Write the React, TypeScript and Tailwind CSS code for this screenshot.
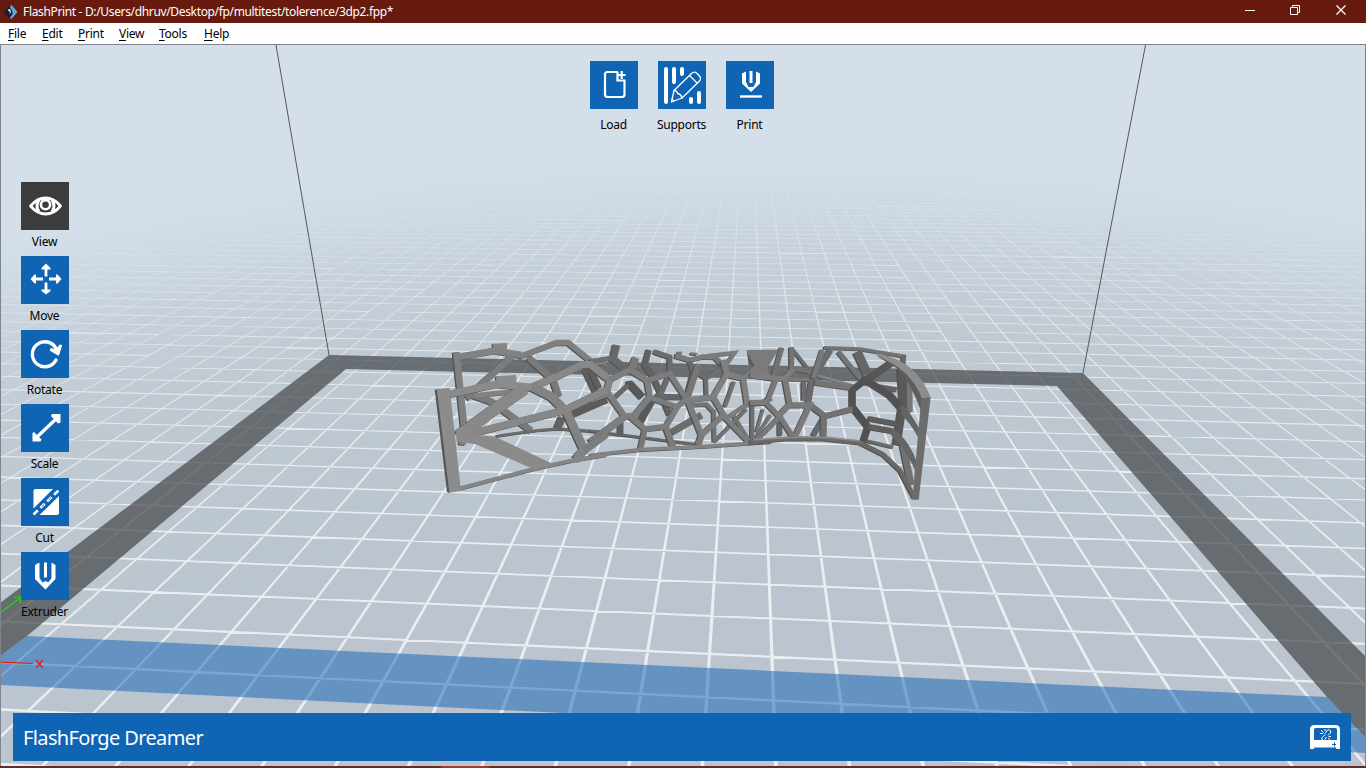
import React from "react";

type Point = [number, number];
type Strut = { pts: string; w: number; c: string };

/* ---------- build plate projection ---------- */

const STEP_U = 0.0485;
const OFFSET_U = 0.0165;
const STEP_V = 1 / 12.58;
const OFFSET_V = -0.66 / 12.58;

function project(col: number, row: number): Point {
  const u = OFFSET_U + STEP_U * col;
  const v = OFFSET_V + STEP_V * row;
  const w = 1 - 0.0982 * u + 0.791 * v;
  return [(27 + 1169.7 * u + 592.7 * v) / w, (636 - 7.45 * u + 24.9 * v) / w];
}

function quad(points: Point[]): string {
  return "M" + points.map(([c, r]) => project(c, r).map((n) => n.toFixed(5)).join(" ")).join("L") + "Z";
}

const HALF = 0.026;
const columns = Array.from({ length: 130 }, (_, i) => i - 58);
const rows = Array.from({ length: 64 }, (_, i) => i - 2);
const columnPath = columns
  .map((c) => quad([[c - HALF, -2.4], [c + HALF, -2.4], [c + HALF, 62], [c - HALF, 62]]))
  .join("");
const rowPaths = rows.map((r) => {
  const half = HALF + Math.max(0, r) * 0.001;
  return quad([[-58, r - half], [72, r - half], [72, r + half], [-58, r + half]]);
}).join("");
const gridPath = columnPath + rowPaths;

/* ---------- model ---------- */

const s = (pts: string, w: number, c: string): Strut => ({ pts, w, c });

const leftBack: Strut[] = [
  s("94,66 118,292 112,345", 20, "#808080"),
  s("105,80 210,62 290,75", 20, "#828282"),
  s("204,50 246,48", 18, "#858585"),
  s("285,80 395,38 430,38 500,95 545,98", 17, "#808080"),
  s("262,78 200,135 125,205", 20, "#7c7c7c"),
  s("310,82 385,150 402,200", 20, "#797979"),
  s("130,190 200,215 320,302", 20, "#7b7b7b"),
  s("150,196 270,184", 14, "#828282"),
  s("215,318 340,301 400,296 545,306", 8, "#6c6c6c"),
  s("412,262 398,295", 22, "#626262"),
  s("480,118 515,190", 18, "#5f5f5f"),
  s("425,258 545,206", 26, "#5c5c5c"),
];

const leftFront: Strut[] = [
  s("75,192 215,162 325,172", 22, "#8b8b8b"),
  s("214,150 274,147", 24, "#8b8b8b"),
  s("320,172 400,138 470,104 496,104 545,142", 22, "#888888"),
  s("320,170 380,200 425,245 478,360 452,388", 26, "#838383"),
  s("110,318 300,270 420,240 545,180", 22, "#878787"),
  s("300,176 200,245 100,318", 36, "#888888"),
  s("478,362 545,312", 22, "#7d7d7d"),
  s("105,475 330,416 440,392 545,374", 12, "#858585"),
];

const middleBack: Strut[] = [
  s("0,78 65,68", 12, "#707070"),
  s("80,30 70,72 112,106", 22, "#686868"),
  s("4,108 28,160", 18, "#606060"),
  s("177,45 165,90 190,125 215,180 240,240", 17, "#626262"),
  s("110,150 122,148 158,186", 22, "#585858"),
  s("115,150 70,192", 14, "#696969"),
  s("190,190 150,262", 22, "#585858"),
  s("195,185 290,186", 17, "#656565"),
  s("192,50 240,66 240,115 212,180", 15, "#6c6c6c"),
  s("255,62 300,75 340,65 375,66 400,92", 15, "#7a7a7a"),
  s("262,54 276,54", 8, "#777777"),
  s("302,56 322,57", 8, "#777777"),
  s("355,62 435,53 405,95", 12, "#7c7c7c"),
  s("300,80 310,110 290,185", 14, "#696969"),
  s("322,112 348,130 350,185", 12, "#6e6e6e"),
  s("350,130 405,92", 12, "#707070"),
  s("0,288 100,300 320,328", 8, "#676767"),
  s("92,262 92,302", 17, "#606060"),
  s("245,292 335,240", 20, "#6c6c6c"),
  s("300,210 350,208 372,230 374,320", 12, "#747474"),
  s("432,140 405,215", 12, "#707070"),
  s("374,320 470,222", 11, "#717171"),
  s("430,240 478,318", 12, "#747474"),
  s("487,205 487,320", 12, "#707070"),
  s("492,318 542,240", 10, "#777777"),
  s("520,222 500,290", 9, "#777777"),
];

const middleFront: Strut[] = [
  s("0,86 60,135 50,175 0,194", 20, "#858585"),
  s("60,135 120,104 172,136 180,185 135,240 105,245 52,170", 18, "#7e7e7e"),
  s("138,68 122,106", 22, "#7a7a7a"),
  s("172,136 240,116 290,192 262,216 182,188", 16, "#7c7c7c"),
  s("262,216 228,275 165,282 120,243", 17, "#7c7c7c"),
  s("165,282 152,342", 16, "#777777"),
  s("228,275 250,337", 18, "#7b7b7b"),
  s("105,245 0,322", 21, "#7e7e7e"),
  s("290,195 326,88", 19, "#777777"),
  s("290,195 370,186 410,118 460,130 472,205", 17, "#808080"),
  s("400,75 412,122", 18, "#808080"),
  s("370,186 402,240 335,300 295,200", 17, "#7d7d7d"),
  s("402,244 482,326", 15, "#7d7d7d"),
  s("335,300 325,330", 19, "#7a7a7a"),
  s("460,130 502,96", 17, "#7d7d7d"),
  s("472,207 520,202 545,188", 17, "#808080"),
  s("472,207 410,250", 13, "#7d7d7d"),
  s("0,361 150,344 350,334 545,320", 11, "#838383"),
];

const rightBack: Strut[] = [
  s("96,38 70,128", 15, "#727272"),
  s("125,36 126,100 180,108", 15, "#747474"),
  s("130,45 178,105", 10, "#6c6c6c"),
  s("105,132 200,134", 11, "#787878"),
  s("162,140 162,195", 14, "#6c6c6c"),
  s("242,45 186,135 174,210", 18, "#6b6b6b"),
  s("205,122 312,152", 8, "#858585"),
  s("266,50 335,135", 14, "#757575"),
  s("222,38 330,42 467,64", 10, "#737373"),
  s("462,60 458,110", 14, "#686868"),
  s("322,50 352,115", 26, "#666666"),
  s("90,250 90,302", 14, "#666666"),
  s("225,243 190,302", 16, "#686868"),
  s("370,152 440,164", 15, "#616161"),
  s("355,250 440,266", 15, "#5d5d5d"),
  s("454,100 460,200 440,330", 24, "#595959"),
  s("340,315 430,336", 10, "#6b6b6b"),
  s("478,112 480,230", 17, "#777777"),
  s("458,322 484,450", 20, "#727272"),
];

const rightFront: Strut[] = [
  s("0,120 72,130 105,130 130,102", 16, "#7e7e7e"),
  s("218,45 190,130", 15, "#787878"),
  s("195,142 310,158", 17, "#757575"),
  s("430,80 340,142", 22, "#565656"),
  s("340,140 308,165 308,215 355,275 338,328", 19, "#505050"),
  s("335,132 365,145 420,180 458,222", 20, "#525252"),
  s("355,275 430,288", 16, "#5f5f5f"),
  s("308,222 225,243 178,208", 17, "#717171"),
  s("222,245 221,310", 18, "#717171"),
  s("78,135 50,205 90,245 18,318", 15, "#787878"),
  s("106,135 120,210 180,210 135,306", 17, "#7a7a7a"),
  s("90,245 130,306", 15, "#797979"),
  s("120,208 82,246", 18, "#7b7b7b"),
  s("0,203 52,202", 16, "#7b7b7b"),
  s("0,322 120,310 220,311 330,323 400,358 450,405 494,488", 13, "#696969"),
  s("10,314 150,306 240,308 330,318", 5, "#8c8c8c"),
];

function Struts({ items, x, y }: { items: Strut[]; x: number; y: number }) {
  return (
    <g transform={`translate(${x} ${y}) scale(0.33333)`} fill="none" strokeLinejoin="miter" strokeMiterlimit={3}>
      {items.map((it, i) => (
        <polyline key={"d" + i} points={it.pts} stroke="#525252" strokeWidth={it.w} transform="translate(-4 2)" />
      ))}
      {items.map((it, i) => (
        <polyline key={"f" + i} points={it.pts} stroke={it.c} strokeWidth={it.w} />
      ))}
    </g>
  );
}

function Scene() {
  return (
    <svg className="absolute top-0 -left-px block" width="1366" height="721" viewBox="0 45 1366 721">
      <defs>
        <radialGradient id="ground" gradientUnits="userSpaceOnUse" cx="0" cy="0" r="1" gradientTransform="translate(760 768) scale(1550 620)">
          <stop offset="0" stopColor="#bcc4ce" />
          <stop offset="0.45" stopColor="#bbc5cf" />
          <stop offset="0.7" stopColor="#bfc9d2" />
          <stop offset="0.84" stopColor="#c6d1db" />
          <stop offset="0.96" stopColor="#d1dde8" />
          <stop offset="1" stopColor="#d4dfea" />
        </radialGradient>
        <radialGradient id="fog" gradientUnits="userSpaceOnUse" cx="0" cy="0" r="1" gradientTransform="translate(760 768) scale(1600 625)">
          <stop offset="0.5" stopColor="#fff" />
          <stop offset="0.7" stopColor="#ccc" />
          <stop offset="0.85" stopColor="#8c8c8c" />
          <stop offset="0.97" stopColor="#000" />
        </radialGradient>
        <mask id="fogMask" maskUnits="userSpaceOnUse" x="0" y="45" width="1366" height="721">
          <rect x="0" y="45" width="1366" height="721" fill="url(#fog)" />
        </mask>
      </defs>
      <rect x="0" y="45" width="1366" height="721" fill="url(#ground)" />
      <g mask="url(#fogMask)">
        <path d={gridPath} fill="#ffffff" fillOpacity="0.7" />
      </g>
      <path
        d="M329 355L1083 373L1366 657V738L1327 697L1057 386L346 369L27 636L0 656V603Z"
        fill="#46494c"
        fillOpacity="0.72"
      />
      <path d="M27 636L1327 697L1366 738V753L0 685V656Z" fill="#1063b5" fillOpacity="0.51" />
      <path d="M276 45L329 355M1145.500 45L1083 373" stroke="#55585b" strokeWidth="1" fill="none" />
      <path d="M0 613L20 598M14 597L21 597L20 603" stroke="#12e012" strokeWidth="1.2" fill="none" />
      <path d="M0 662L33 663.5M36 660L43 668M43 660L36 668" stroke="#f01414" strokeWidth="1.2" fill="none" />

      <Struts items={leftBack} x={425} y={330} />
      <Struts items={middleBack} x={590} y={335} />
      <g transform="translate(750 335) scale(0.33333)">
        <path d="M-10 45L86 44L52 100L60 125L0 125L18 98Z" fill="#7b7b7b" />
        <path d="M-10 45L18 98L-4 90Z" fill="#5c5c5c" />
      </g>
      <Struts items={rightBack} x={750} y={335} />
      <Struts items={middleFront} x={590} y={335} />
      <Struts items={rightFront} x={750} y={335} />
      <Struts items={leftFront} x={425} y={330} />
      <g transform="translate(425 330) scale(0.33333)">
        <path d="M92 300L125 285L150 314L210 320L384 402L330 419L150 342L95 336Z" fill="#8a8a8a" />
        <path d="M30 178L74 173L108 482L70 489Z" fill="#8c8c8c" />
        <path d="M29 178L36 182L73 488L66 486Z" fill="#555" />
      </g>
      <g transform="translate(750 335) scale(0.33333)">
        <path d="M380 58Q450 82 488 128L518 190L514 230L508 215Q480 140 440 100L385 66Z" fill="#5e5e5e" />
        <path d="M450 210L468 215L509 282L507 312Q480 262 455 240Z" fill="#656565" />
        <path d="M425 280L450 298Q482 330 500 380L498 412Q475 360 445 325L420 296Z" fill="#656565" />
        <path d="M380 54Q450 68 492 108Q525 142 542 187L517 192Q500 148 468 116Q430 82 380 62Z" fill="#8d8d8d" />
        <path d="M514 190L542 186L506 494L487 494Z" fill="#6c6c6c" />
      </g>
    </svg>
  );
}

/* ---------- icons, drawn on a 48 unit tile ---------- */

const tile = "block h-12 w-12";

const LoadIcon = () => (
  <svg className={tile} viewBox="0 0 48 48" fill="none" stroke="#fff" strokeWidth="2.2">
    <path d="M28 11H17.500Q15 11 15 13.500V33.500Q15 36 17.500 36H32Q34.500 36 34.500 33.500V19.500H27.500V11" />
    <path d="M28 14H35.500M31.700 10V18" />
  </svg>
);

const SupportsIcon = () => (
  <svg className={tile} viewBox="0 0 48 48" fill="none" stroke="#fff" strokeLinecap="round">
    <path d="M8 8V41M16 8V21M24 8V13M33 38V41M41 32V41" strokeWidth="4" />
    <g strokeWidth="1.300" strokeLinejoin="round">
      <path d="M13.500 41L16 29.500L33.500 12.500Q36 10 38.500 12L41.500 15Q43.500 17.500 41.500 20L24 37Z" />
      <path d="M16 29.500Q19 29.500 19.500 32.500Q23 33 24 37M31.500 14.500L39 22M14 38L16 40" />
    </g>
  </svg>
);

const PrintIcon = () => (
  <svg className={tile} viewBox="0 0 48 48" fill="none" stroke="#fff">
    <path d="M16 12.500L20 10.500V21L22.500 26H27.500L30 21V10.500L34 12.500V22.500L25 31L16 22.500Z" fill="#fff" stroke="none" />
    <path d="M25 10V22" strokeWidth="3" />
    <path d="M14 35.500H36" strokeWidth="2.400" />
  </svg>
);

const ViewIcon = () => (
  <svg className={tile} viewBox="0 0 48 48" fill="none" stroke="#fff">
    <path d="M9.500 24Q16.500 16 24.500 16Q33 16 39.500 24Q33 32 24.500 32Q16.500 32 9.500 24Z" strokeWidth="2.800" strokeLinejoin="round" />
    <path d="M18 18Q14 24 18 30M31 18Q35 24 31 30" strokeWidth="3" />
    <circle cx="24.500" cy="22.700" r="4.600" strokeWidth="2.600" />
  </svg>
);

const MoveIcon = () => (
  <svg className={tile} viewBox="0 0 48 48" fill="#fff">
    <path d="M23.600 20.500V13.500H20.500V12L25 7.500L29.500 12V13.500H26.400V20.500ZM23.600 26.500V33.500H20.500V35L25 38.500L29.500 35V33.500H26.400V26.500ZM22 21.600H15V18.500H13.500L9.500 23L13.500 27.500H15V24.400H22ZM28 21.600H35V18.500H36.500L40.500 23L36.500 27.500H35V24.400H28Z" />
  </svg>
);

const RotateIcon = () => (
  <svg className={tile} viewBox="0 0 48 48" fill="none" stroke="#fff">
    <path d="M35 30A12.500 12.500 0 1 1 35 18.500" strokeWidth="3.400" strokeLinecap="round" />
    <path d="M40.500 15.500L37.500 25L29.500 20.500L30 18.500L35 20L39 15Z" fill="#fff" strokeWidth="1.200" strokeLinejoin="round" />
  </svg>
);

const ScaleIcon = () => (
  <svg className={tile} viewBox="0 0 48 48" fill="#fff">
    <path d="M15 34L36 14" stroke="#fff" strokeWidth="3.200" />
    <path d="M31 10H39.500V18.500L37 19.500L30 12ZM11.500 29L13 28L20.500 35.500L19.500 37.500H11.500Z" />
  </svg>
);

const CutIcon = () => (
  <svg className={tile} viewBox="0 0 48 48" fill="#fff">
    <path d="M12.500 13Q12.500 11 14.500 11H32L12.500 30.500ZM38 18V35Q38 37 36 37H18.500Z" />
    <path d="M12.500 36.500L38 12" stroke="#fff" strokeWidth="2.600" strokeDasharray="6 3.500" />
    <path d="M20.500 28.800L23 26.400M27.500 22L30 19.700" stroke="#0f64b4" strokeWidth="0.800" />
  </svg>
);

const ExtruderIcon = () => (
  <svg className={tile} viewBox="0 0 48 48" fill="#fff">
    <path d="M14 13L18.500 10.500V26L22 31.500H26.500L30.500 26V10.500L34.500 13V27L24.500 37.500L14 27Z" />
    <path d="M23 10.500H26V25.500H23Z" />
    <path d="M20.500 31L24.500 29L28.500 31L24.500 37Z" />
  </svg>
);

const PrinterIcon = () => (
  <svg className="block h-6 w-[30px]" viewBox="0 0 30 24" fill="none">
    <path d="M0 24V4.500Q0 0 4.500 0H25.500Q30 0 30 4.500V24H26V22.500H4V24Z" fill="#fff" />
    <path d="M4 4.500Q4 3 5.500 3H25.500Q27 3 27 4.500V15H4Z" fill="#0f64b4" />
    <path d="M15 8.500L17.500 5Q19 4 20.500 5.500Q21.500 7 20 8.500L18 10.500M15.500 9.500L12.500 12Q11 13.500 12.500 15M16.500 12L15 14.500M11 5L13.500 7.500M10 8.500H13M15 4V6M18 13L20 14.500M18.500 11.500H21" stroke="#fff" strokeWidth="1" />
    <path d="M22 19.500H26M24.500 17.500V21.500" stroke="#0f64b4" />
  </svg>
);

const AppLogo = () => (
  <svg className="block h-4 w-4" viewBox="0 0 16 16">
    <path d="M7.500 0.500L0.500 8L7.500 15.500L8.500 12L10 8Z" fill="#16202b" />
    <path d="M8 0.500L14.500 8L8 15.500L7 13Q10 11 9.500 8Q9 5.500 7 4Z" fill="#5fa9de" />
    <path d="M4.500 5.500L7 5L8 8L6 11L7 8.500Z" fill="#e3edf4" />
  </svg>
);

/* ---------- shell ---------- */

type Tool = { label: string; icon: React.ReactNode; active?: boolean };

const sideTools: Tool[] = [
  { label: "View", icon: <ViewIcon />, active: true },
  { label: "Move", icon: <MoveIcon /> },
  { label: "Rotate", icon: <RotateIcon /> },
  { label: "Scale", icon: <ScaleIcon /> },
  { label: "Cut", icon: <CutIcon /> },
  { label: "Extruder", icon: <ExtruderIcon /> },
];

const topTools: Tool[] = [
  { label: "Load", icon: <LoadIcon /> },
  { label: "Supports", icon: <SupportsIcon /> },
  { label: "Print", icon: <PrintIcon /> },
];

function ToolButton({ tool, gap }: { tool: Tool; gap: string }) {
  return (
    <button className={`flex h-[74px] w-12 flex-col items-center text-black ${gap}`}>
      <span className={tool.active ? "bg-[#3c3c3c]" : "bg-[#0f64b4]"}>{tool.icon}</span>
      <span className="whitespace-nowrap pr-px text-[12px] leading-4 tracking-[-0.25px]">{tool.label}</span>
    </button>
  );
}

const menu = [
  { label: "File", width: "w-[34px]" },
  { label: "Edit", width: "w-9" },
  { label: "Print", width: "w-[41px]" },
  { label: "View", width: "w-10" },
  { label: "Tools", width: "w-[45px]" },
  { label: "Help", width: "w-10" },
];

export default function App() {
  return (
    <div className="flex h-screen w-screen flex-col overflow-hidden bg-white font-['Noto_Sans',sans-serif]">
      <header className="flex h-[23px] shrink-0 items-center bg-[#691a0e] pl-[3px] text-white">
        <AppLogo />
        <span className="ml-1 flex-1 whitespace-nowrap text-[12px] leading-4 tracking-[-0.345px]">
          FlashPrint - D:/Users/dhruv/Desktop/fp/multitest/tolerence/3dp2.fpp*
        </span>
        <div className="flex items-center pr-[19px] pb-[2px]">
          <svg className="mr-[34px] h-[11px] w-[11px]" viewBox="0 0 11 11"><path d="M0 5.500H10" stroke="#fff" /></svg>
          <svg className="mr-[35px] h-[11px] w-[11px]" viewBox="0 0 11 11" fill="none" stroke="#fff">
            <path d="M0.500 2.500H7.500V9.500H0.500ZM2.500 2.500V0.500H9.500V7.500H7.500" />
          </svg>
          <svg className="h-[11px] w-[11px]" viewBox="0 0 11 11"><path d="M0.500 0.500L9.500 9.500M9.500 0.500L0.500 9.500" stroke="#fff" strokeWidth="1.200" /></svg>
        </div>
      </header>
      <nav className="flex h-[21px] shrink-0 items-center pl-2 text-[12px] leading-4 tracking-[-0.25px] text-black">
        {menu.map((m) => (
          <span key={m.label} className={`${m.width} whitespace-nowrap`}>
            <span className="underline underline-offset-2">{m.label[0]}</span>
            {m.label.slice(1)}
          </span>
        ))}
      </nav>
      <main className="relative flex min-h-0 flex-1 flex-col border-x border-t border-[#80848f]">
        <div className="absolute inset-0 overflow-hidden"><Scene /></div>
        <div className="relative flex h-[137px] justify-center gap-5 pt-4 pr-[2px]">
          {topTools.map((t) => <ToolButton key={t.label} tool={t} gap="gap-2" />)}
        </div>
        <div className="relative flex flex-1 flex-col pl-5">
          {sideTools.map((t) => <ToolButton key={t.label} tool={t} gap="gap-1" />)}
        </div>
        <footer className="relative mx-3 mb-[5px] mr-[14px] flex h-12 shrink-0 items-center justify-between bg-[#0f64b4] pl-[10px] pr-[11px] text-white">
          <span className="pt-px text-[20px] leading-6 tracking-[-0.62px]">FlashForge Dreamer</span>
          <PrinterIcon />
        </footer>
      </main>
      <div className="flex h-[2px] shrink-0 bg-[#642c28] pl-[441px]"><div className="w-12 bg-[#a23a2a]" /></div>
    </div>
  );
}
